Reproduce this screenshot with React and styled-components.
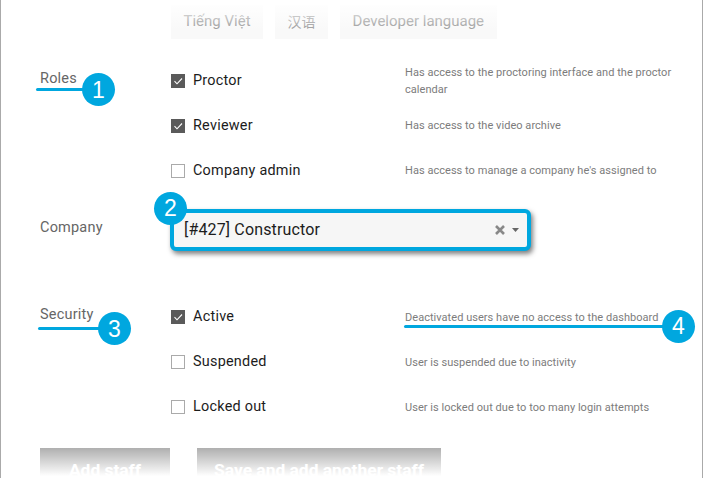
import styled, { createGlobalStyle } from 'styled-components';

const GlobalStyle = createGlobalStyle`
  html, body {
    margin: 0;
    padding: 0;
    background: #fff;
  }
`;

const BLUE = '#00a7df';

const Page = styled.div`
  position: relative;
  width: 703px;
  height: 478px;
  box-sizing: border-box;
  overflow: hidden;
  padding: 5px 0 0 39px;
  background: #fff;
  border-left: 1px solid #aaa;
  border-right: 1px solid #aaa;
  font-family: Roboto, "Noto Sans CJK SC", sans-serif;

  &::before {
    content: '';
    position: absolute;
    left: -1px;
    right: -1px;
    top: 0;
    height: 30px;
    background: linear-gradient(#fff, rgba(255, 255, 255, 0));
  }

  &::after {
    content: '';
    position: absolute;
    left: -1px;
    right: -1px;
    bottom: 0;
    height: 48px;
    background: linear-gradient(rgba(255, 255, 255, 0), #fff 96%);
  }
`;

const Tabs = styled.div`
  display: flex;
  gap: 12px;
  margin-left: 131px;
  height: 34px;
  margin-bottom: 18px;
`;

const Tab = styled.div`
  display: flex;
  align-items: center;
  padding: 0 12.5px 3px;
  background: #f9f9f9;
  color: #9c9c9c;
  font-size: ${p => p.$size || 15}px;
`;

const Section = styled.div`
  display: grid;
  grid-template-columns: 131px 1fr;
`;

const Label = styled.div`
  position: relative;
  color: #666;
  font-size: 14.5px;
  letter-spacing: 0.2px;
  line-height: 20px;
  padding-top: ${p => p.$top || 0}px;
`;

const Option = styled.div`
  display: grid;
  grid-template-columns: 234px 270px;
  align-items: center;
  height: 45px;
`;

const CheckLabel = styled.div`
  display: flex;
  align-items: center;
  gap: 8px;
  margin-top: 2px;
  color: #1c1c1c;
  font-size: 14.4px;
  letter-spacing: 0.25px;
`;

const Box = styled.span`
  display: flex;
  align-items: center;
  justify-content: center;
  width: 14px;
  height: 14px;
  box-sizing: border-box;
  background: ${p => (p.$on ? '#5a5a5a' : '#fff')};
  border: 1px solid ${p => (p.$on ? '#5a5a5a' : '#aaa')};
`;

const Hint = styled.div`
  position: relative;
  margin-top: ${p => p.$drop}px;
  color: #7c7c7c;
  font-size: 11px;
  line-height: 17px;
  letter-spacing: 0.04px;
`;

const Select = styled.div`
  position: relative;
  display: flex;
  align-items: center;
  justify-content: space-between;
  box-sizing: border-box;
  width: 361px;
  height: 42px;
  margin: 17px 0 42px -1px;
  padding: 0 8px 2px 10px;
  background: #f6f6f6;
  border: 4px solid ${BLUE};
  border-radius: 6px;
  box-shadow: 2px 3px 5px rgba(0, 0, 0, 0.5);
  color: #1c1c1c;
  font-size: 16px;
  letter-spacing: 0.15px;
`;

const SelectTools = styled.div`
  display: flex;
  align-items: center;
  gap: 7px;
  padding-top: 2px;
`;

const Buttons = styled.div`
  display: flex;
  gap: 27px;
  margin-top: 20px;
`;

const Button = styled.div`
  display: flex;
  justify-content: center;
  height: 60px;
  width: ${p => p.$w}px;
  padding-top: 12px;
  box-sizing: border-box;
  background: #7c7c7c;
  color: #fff;
  font-size: 17.4px;
  font-weight: 700;
`;

const Line = styled.span`
  position: absolute;
  height: 3px;
  border-radius: 2px;
  background: ${BLUE};
  z-index: 2;
`;

const RolesLine = styled(Line)`
  left: -4px;
  top: 31px;
  width: 50px;
`;

const SecurityLine = styled(Line)`
  left: -2px;
  top: 34px;
  width: 64px;
`;

const HintLine = styled(Line)`
  left: -1px;
  top: 16px;
  width: 262px;
`;

const Badge = styled.span`
  position: absolute;
  display: flex;
  align-items: center;
  justify-content: center;
  width: 33px;
  height: 33px;
  border-radius: 50%;
  background: ${BLUE};
  color: #fff;
  font-family: "Liberation Sans", Arial, sans-serif;
  font-size: 23px;
  z-index: 3;
`;

const RolesBadge = styled(Badge)`
  left: 42px;
  top: 16px;
`;

const SelectBadge = styled(Badge)`
  left: -20px;
  top: -21px;
`;

const SecurityBadge = styled(Badge)`
  left: 58px;
  top: 19px;
`;

const HintBadge = styled(Badge)`
  left: 257px;
  top: 1px;
`;

const Check = () => (
  <svg width="12" height="12" viewBox="0 0 12 12" fill="none">
    <path d="M2.5 6.2 5 8.8 10 3.5" stroke="#fff" strokeWidth="1.1" />
  </svg>
);

const CheckOption = ({ on, label, drop, children }) => (
  <Option>
    <CheckLabel>
      <Box $on={on}>{on && <Check />}</Box>
      {label}
    </CheckLabel>
    <Hint $drop={drop}>{children}</Hint>
  </Option>
);

const App = () => (
  <Page>
    <GlobalStyle />
    <Tabs>
      <Tab>Tiếng Việt</Tab>
      <Tab $size={14}>汉语</Tab>
      <Tab>Developer language</Tab>
    </Tabs>

    <Section>
      <Label $top={12}>
        Roles
        <RolesLine />
        <RolesBadge>1</RolesBadge>
      </Label>
      <div>
        <CheckOption on label="Proctor" drop={2}>
          Has access to the proctoring interface and the proctor calendar
        </CheckOption>
        <CheckOption on label="Reviewer" drop={2}>Has access to the video archive</CheckOption>
        <CheckOption label="Company admin" drop={2}>Has access to manage a company he's assigned to</CheckOption>
      </div>
    </Section>

    <Section>
      <Label $top={26}>Company</Label>
      <Select>
        <SelectBadge>2</SelectBadge>
        [#427] Constructor
        <SelectTools>
          <svg width="10" height="10" viewBox="0 0 10 10" fill="none">
            <path d="M1 1 9 9M9 1 1 9" stroke="#888" strokeWidth="2.6" />
          </svg>
          <svg width="7" height="4" viewBox="0 0 7 4">
            <path d="M0 0H7L3.5 4Z" fill="#666" />
          </svg>
        </SelectTools>
      </Select>
    </Section>

    <Section>
      <Label $top={12}>
        Security
        <SecurityLine />
        <SecurityBadge>3</SecurityBadge>
      </Label>
      <div>
        <CheckOption on label="Active" drop={4}>
          Deactivated users have no access to the dashboard
          <HintLine />
          <HintBadge>4</HintBadge>
        </CheckOption>
        <CheckOption label="Suspended" drop={4}>User is suspended due to inactivity</CheckOption>
        <CheckOption label="Locked out" drop={4}>User is locked out due to too many login attempts</CheckOption>
      </div>
    </Section>

    <Buttons>
      <Button $w={130}>Add staff</Button>
      <Button $w={244}>Save and add another staff</Button>
    </Buttons>
  </Page>
);

export default App;
